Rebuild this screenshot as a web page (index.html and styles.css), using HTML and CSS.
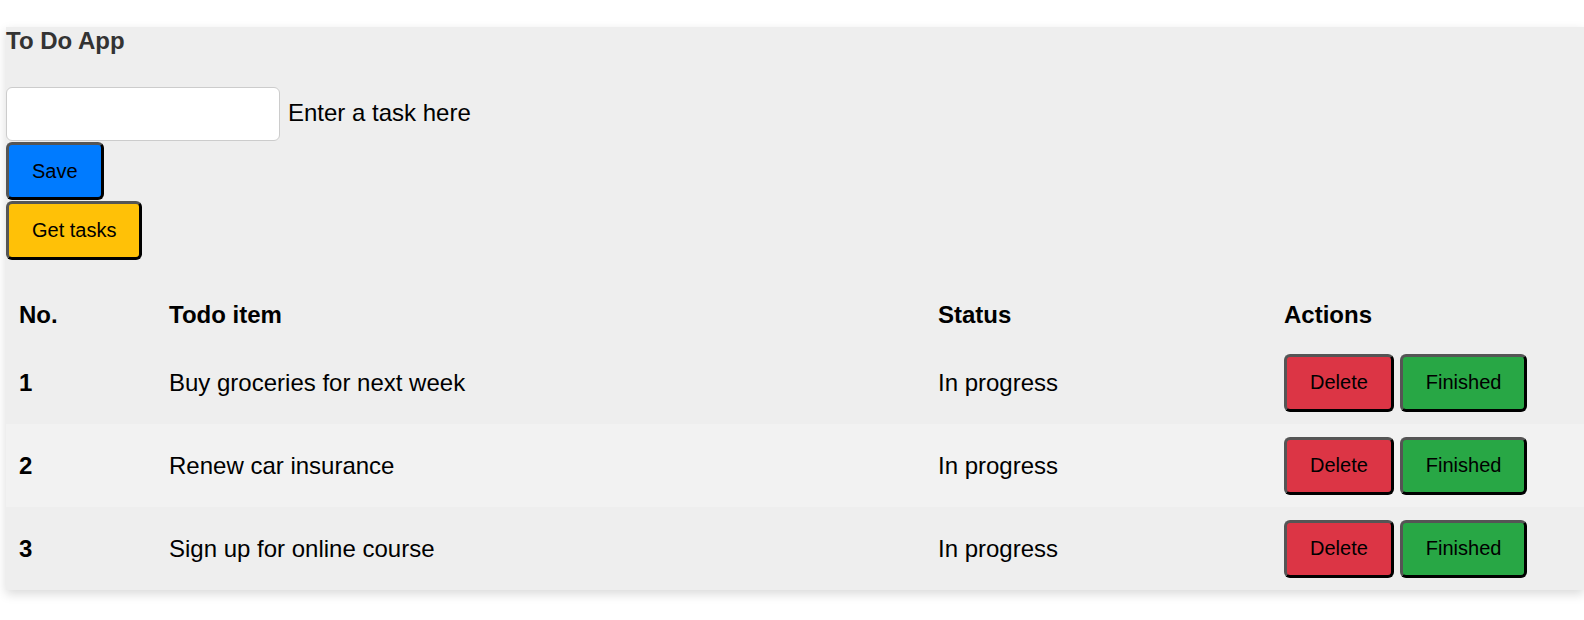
FILE: index.html
```html
<!DOCTYPE html>
<html lang="en">
<head>
<meta charset="utf-8">
<title>To Do App</title>
<link rel="stylesheet" href="styles.css">
</head>
<body>
<div class="app">
  <h3 class="title">To Do App</h3>
  <div class="form">
    <div class="task-row">
      <input class="task-input" type="text" id="task">
      <label class="task-label" for="task">Enter a task here</label>
    </div>
    <button class="btn btn-save">Save</button>
    <button class="btn btn-get">Get tasks</button>
  </div>
  <table class="tasks">
    <colgroup>
      <col class="c-no"><col class="c-item"><col class="c-status"><col class="c-actions">
    </colgroup>
    <thead>
      <tr><th>No.</th><th>Todo item</th><th>Status</th><th>Actions</th></tr>
    </thead>
    <tbody>
      <tr>
        <th>1</th><td>Buy groceries for next week</td><td>In progress</td>
        <td><div class="actions"><button class="btn btn-delete">Delete</button><button class="btn btn-finish">Finished</button></div></td>
      </tr>
      <tr>
        <th>2</th><td>Renew car insurance</td><td>In progress</td>
        <td><div class="actions"><button class="btn btn-delete">Delete</button><button class="btn btn-finish">Finished</button></div></td>
      </tr>
      <tr>
        <th>3</th><td>Sign up for online course</td><td>In progress</td>
        <td><div class="actions"><button class="btn btn-delete">Delete</button><button class="btn btn-finish">Finished</button></div></td>
      </tr>
    </tbody>
  </table>
</div>
</body>
</html>
```
FILE: styles.css
```css
html {
  overflow: hidden;
}
body {
  margin: 0;
  padding: 0 0 30px 0;
  background: #fff;
  font-family: "Liberation Sans", Arial, sans-serif;
  color: #000;
}
.app {
  margin: 27px 0 0 6px;
  background: #eeeeee;
  box-shadow: 0 4px 10px rgba(0, 0, 0, 0.15);
}
.title {
  margin: 0;
  font-size: 24px;
  font-weight: bold;
  line-height: 27px;
  color: #333;
}
.form {
  margin-top: 33px;
  display: flex;
  flex-direction: column;
  align-items: flex-start;
  gap: 1px;
}
.task-row {
  display: flex;
  align-items: center;
  gap: 8px;
}
.task-input {
  box-sizing: border-box;
  width: 274px;
  height: 54px;
  margin: 0;
  border: 1px solid #ccc;
  border-radius: 6px;
  background: #fff;
  font-size: 20px;
  padding: 0 10px;
}
.task-label {
  font-size: 24px;
  line-height: 28px;
  padding-bottom: 3px;
}
.btn {
  box-sizing: border-box;
  margin: 0;
  font-family: "Liberation Sans", Arial, sans-serif;
  font-size: 20px;
  line-height: 23px;
  padding: 14px 23px;
  border: 3px solid;
  border-color: #555 #000 #000 #555;
  border-radius: 6px;
  color: #000;
  cursor: pointer;
}
.btn-save { background: #007bff; height: 58px; }
.btn-get { background: #ffc107; height: 59px; }
.btn-delete { background: #dc3545; height: 58px; }
.btn-finish { background: #28a745; height: 58px; }
.tasks {
  margin-top: 29px;
  width: 100%;
  border-collapse: collapse;
  table-layout: fixed;
}
.c-no { width: 150px; }
.c-item { width: 769px; }
.c-status { width: 346px; }
.tasks th, .tasks td {
  text-align: left;
  font-size: 24px;
  line-height: 28px;
  padding: 12px 13px;
}
.tasks th { font-weight: bold; }
.tasks td { font-weight: normal; }
.tasks thead th { height: 28px; }
.tasks tbody th, .tasks tbody td { height: 59px; }
.tasks tbody tr:nth-child(even) { background: #f2f2f2; }
.actions {
  display: flex;
  gap: 6px;
}
```
